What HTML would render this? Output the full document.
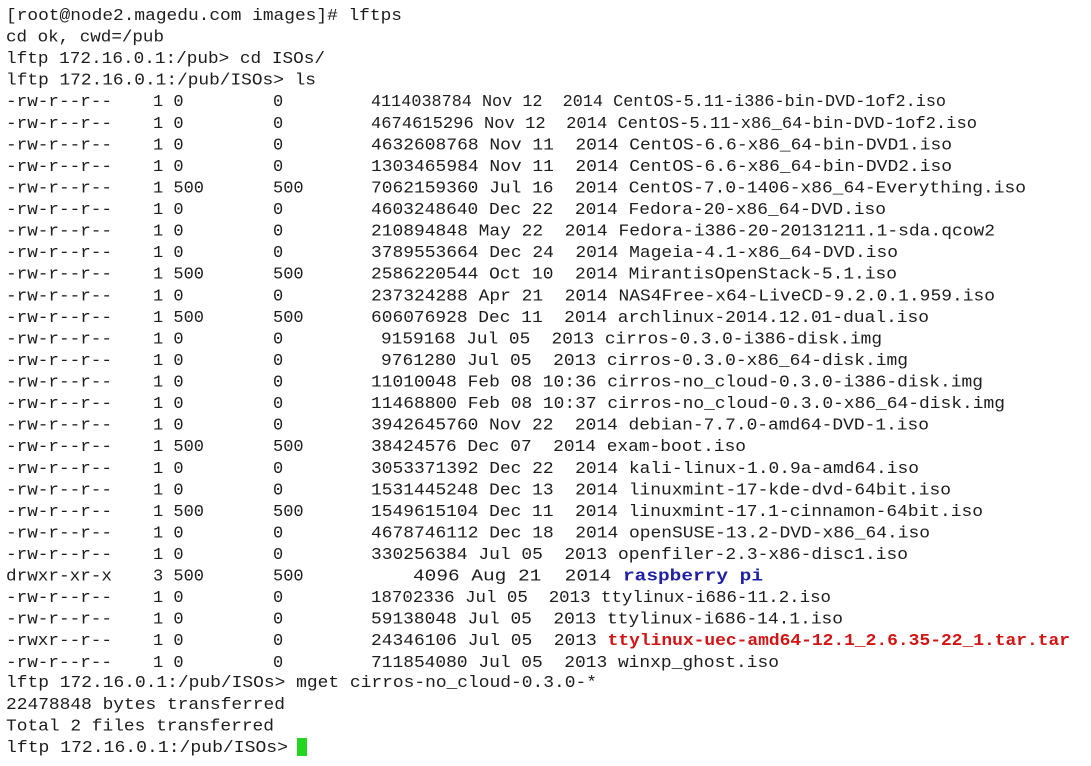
<!DOCTYPE html>
<html><head><meta charset="utf-8"><style>
html,body{margin:0;padding:0;background:#fff;width:1091px;height:766px;overflow:hidden}
svg{display:block}
text{font-family:"Liberation Mono","Noto Sans CJK SC",monospace;font-size:17px;fill:#1c1c1c;white-space:pre}
.b{fill:#1f1fa8;font-weight:bold}
.r{fill:#d41414;font-weight:bold}
</style></head><body>
<svg width="1091" height="766" xmlns="http://www.w3.org/2000/svg" xml:space="preserve">
<text x="6" y="20" textLength="396" lengthAdjust="spacingAndGlyphs">[root@node2.magedu.com images]# lftps</text>
<text x="6" y="41.6" textLength="158" lengthAdjust="spacingAndGlyphs">cd ok, cwd=/pub</text>
<text x="6" y="63.1" textLength="319" lengthAdjust="spacingAndGlyphs">lftp 172.16.0.1:/pub&gt; cd ISOs/</text>
<text x="6" y="84.7" textLength="310" lengthAdjust="spacingAndGlyphs">lftp 172.16.0.1:/pub/ISOs&gt; ls</text>
<g id="rows"></g>
<text x="6" y="687.2" textLength="591" lengthAdjust="spacingAndGlyphs">lftp 172.16.0.1:/pub/ISOs&gt; mget cirros-no_cloud-0.3.0-*</text>
<text x="6" y="708.8" textLength="279" lengthAdjust="spacingAndGlyphs">22478848 bytes transferred</text>
<text x="6" y="730.4" textLength="268" lengthAdjust="spacingAndGlyphs">Total 2 files transferred</text>
<text x="6" y="752" textLength="282" lengthAdjust="spacingAndGlyphs">lftp 172.16.0.1:/pub/ISOs&gt;</text>
<rect x="297" y="738" width="10" height="18" fill="#22d622"/>
</svg>
<script>
var rows=[
["-rw-r--r--","1 0","0",371,"4114038784 Nov 12  2014 CentOS-5.11-i386-bin-DVD-1of2.iso",946],
["-rw-r--r--","1 0","0",371,"4674615296 Nov 12  2014 CentOS-5.11-x86_64-bin-DVD-1of2.iso",977],
["-rw-r--r--","1 0","0",371,"4632608768 Nov 11  2014 CentOS-6.6-x86_64-bin-DVD1.iso",952],
["-rw-r--r--","1 0","0",371,"1303465984 Nov 11  2014 CentOS-6.6-x86_64-bin-DVD2.iso",952],
["-rw-r--r--","1 500","500",371,"7062159360 Jul 16  2014 CentOS-7.0-1406-x86_64-Everything.iso",1026],
["-rw-r--r--","1 0","0",371,"4603248640 Dec 22  2014 Fedora-20-x86_64-DVD.iso",886],
["-rw-r--r--","1 0","0",371,"210894848 May 22  2014 Fedora-i386-20-20131211.1-sda.qcow2",995],
["-rw-r--r--","1 0","0",371,"3789553664 Dec 24  2014 Mageia-4.1-x86_64-DVD.iso",898],
["-rw-r--r--","1 500","500",371,"2586220544 Oct 10  2014 MirantisOpenStack-5.1.iso",897],
["-rw-r--r--","1 0","0",371,"237324288 Apr 21  2014 NAS4Free-x64-LiveCD-9.2.0.1.959.iso",995],
["-rw-r--r--","1 500","500",371,"606076928 Dec 11  2014 archlinux-2014.12.01-dual.iso",929],
["-rw-r--r--","1 0","0",381,"9159168 Jul 05  2013 cirros-0.3.0-i386-disk.img",882],
["-rw-r--r--","1 0","0",381,"9761280 Jul 05  2013 cirros-0.3.0-x86_64-disk.img",908],
["-rw-r--r--","1 0","0",371,"11010048 Feb 08 10:36 cirros-no_cloud-0.3.0-i386-disk.img",983],
["-rw-r--r--","1 0","0",371,"11468800 Feb 08 10:37 cirros-no_cloud-0.3.0-x86_64-disk.img",1005],
["-rw-r--r--","1 0","0",371,"3942645760 Nov 22  2014 debian-7.7.0-amd64-DVD-1.iso",929],
["-rw-r--r--","1 500","500",371,"38424576 Dec 07  2014 exam-boot.iso",746],
["-rw-r--r--","1 0","0",371,"3053371392 Dec 22  2014 kali-linux-1.0.9a-amd64.iso",919],
["-rw-r--r--","1 0","0",371,"1531445248 Dec 13  2014 linuxmint-17-kde-dvd-64bit.iso",951],
["-rw-r--r--","1 500","500",371,"1549615104 Dec 11  2014 linuxmint-17.1-cinnamon-64bit.iso",983],
["-rw-r--r--","1 0","0",371,"4678746112 Dec 18  2014 openSUSE-13.2-DVD-x86_64.iso",930],
["-rw-r--r--","1 0","0",371,"330256384 Jul 05  2013 openfiler-2.3-x86-disc1.iso",908],
["drwxr-xr-x","3 500","500",413,"4096 Aug 21  2014 |raspberry pi",763,"b"],
["-rw-r--r--","1 0","0",371,"18702336 Jul 05  2013 ttylinux-i686-11.2.iso",831],
["-rw-r--r--","1 0","0",371,"59138048 Jul 05  2013 ttylinux-i686-14.1.iso",843],
["-rwxr--r--","1 0","0",371,"24346106 Jul 05  2013 |ttylinux-uec-amd64-12.1_2.6.35-22_1.tar.tar",1070,"r"],
["-rw-r--r--","1 0","0",371,"711854080 Jul 05  2013 winxp_ghost.iso",779]
];
var NS="http://www.w3.org/2000/svg",g=document.getElementById("rows");
function t(x,y,s,w,c){var e=document.createElementNS(NS,"text");e.setAttribute("x",x);e.setAttribute("y",y);if(w){e.setAttribute("textLength",w);e.setAttribute("lengthAdjust","spacingAndGlyphs");}if(c)e.setAttribute("class",c);e.textContent=s;g.appendChild(e);}
rows.forEach(function(r,i){var y=(20+(i+4)*21.56).toFixed(1);
t(6,y,r[0],106);t(153,y,r[1]);t(273,y,r[2]);
var s=r[4];var len=s.replace("|","").length;var cw=(r[5]-r[3])/len;
if(s.indexOf("|")>=0){var p=s.split("|");var a=p[0].replace(/\s+$/,"");t(r[3],y,a,cw*a.length);t(r[3]+cw*p[0].length,y,p[1],cw*p[1].length,r[6]);}
else t(r[3],y,s,r[5]-r[3]);});
</script>
</body></html>
